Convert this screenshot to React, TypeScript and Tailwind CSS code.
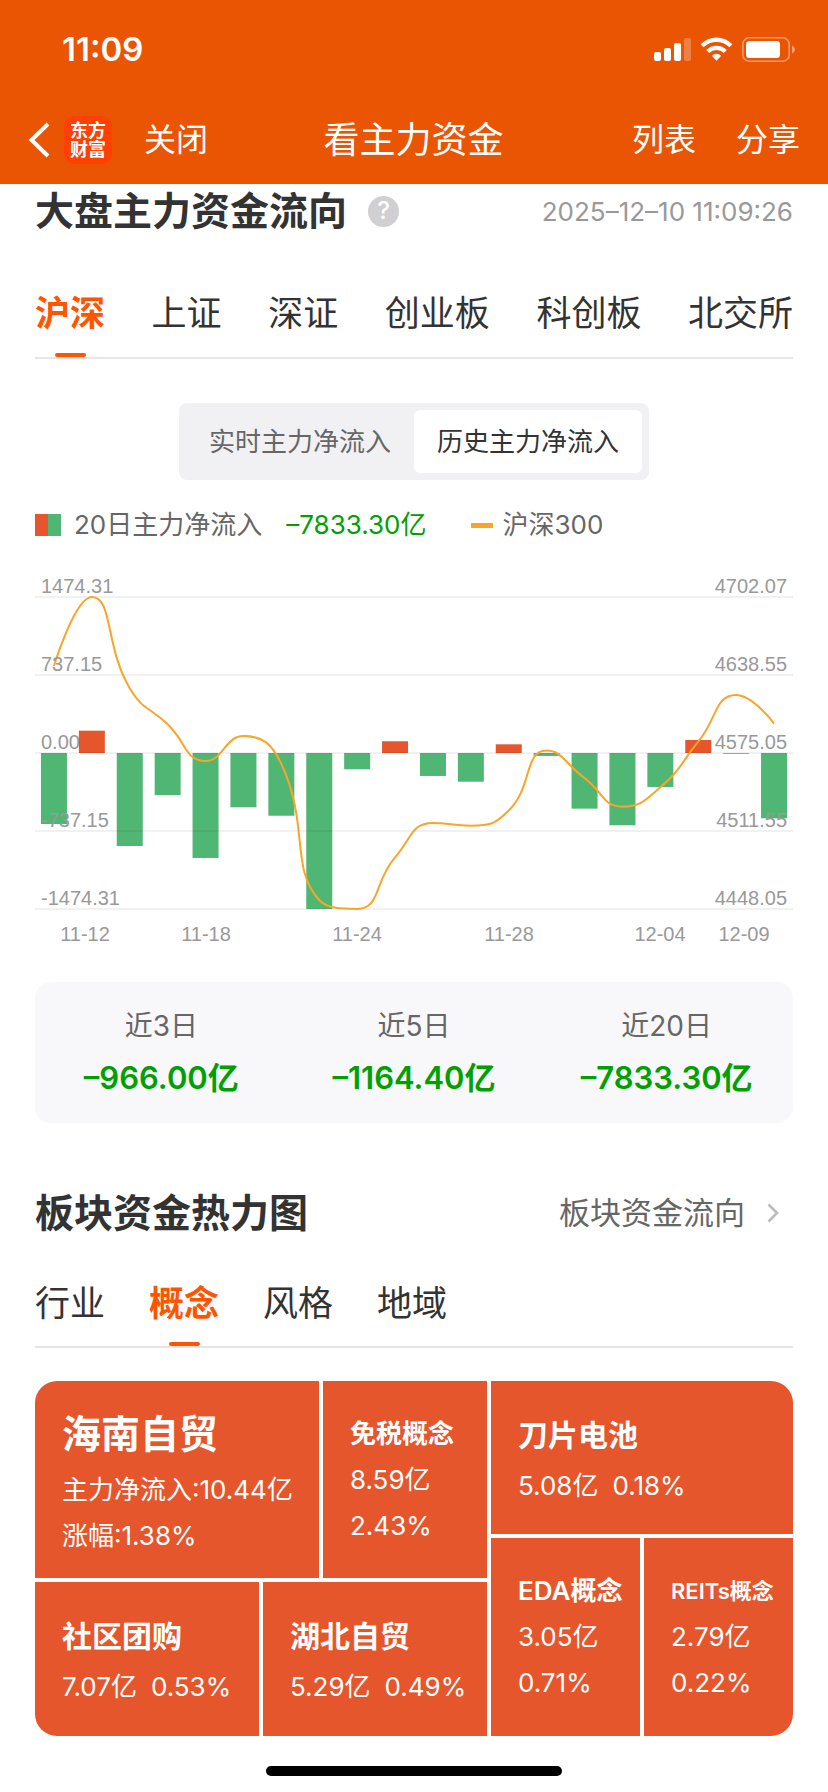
import { useState } from "react";

const FLOWS = [
  -671, 211, -879, -397, -992, -513, -593, -1474.31, -154, 111, -217, -271, 82,
  -28, -526, -683, -321, 123, -7, -617,
];

const INDEX = [
  4646.1, 4702.07, 4627.7, 4598.4, 4568.5, 4588.8, 4566.2, 4455.4, 4448.1,
  4490.1, 4518.1, 4515.9, 4528.2, 4577.0, 4554.6, 4531.4, 4547.2, 4584.3,
  4622.3, 4599.0,
];

const LEFT_TICKS = ["1474.31", "737.15", "0.00", "-737.15", "-1474.31"];
const RIGHT_TICKS = ["4702.07", "4638.55", "4575.05", "4511.55", "4448.05"];
const DATES = [
  { x: 50, text: "11-12" },
  { x: 171, text: "11-18" },
  { x: 322, text: "11-24" },
  { x: 474, text: "11-28" },
  { x: 625, text: "12-04" },
  { x: 709, text: "12-09" },
];

const STEP = 37.9;
const TOP = 37;
const BOTTOM = 349;
const ZERO = 193;

type Point = [number, number];

const clamp = (v: number, a: number, b: number) =>
  Math.max(Math.min(a, b), Math.min(Math.max(a, b), v));

/* Smooth curve whose control points never leave the box of their segment. */
function smoothPath(points: Point[]): string {
  let d = `M${points[0][0]} ${points[0][1]}`;
  let c0: Point = points[0];
  for (let i = 1; i < points.length; i++) {
    const [x, y] = points[i];
    const prev = points[i - 1];
    let c1: Point = [x, y];
    let next0: Point = [x, y];
    if (i < points.length - 1) {
      const next = points[i + 1];
      const lp = Math.hypot(x - prev[0], y - prev[1]);
      const ln = Math.hypot(next[0] - x, next[1] - y);
      const r = ln / (ln + lp);
      next0 = [
        clamp(x + (next[0] - prev[0]) * 0.5 * r, next[0], x),
        clamp(y + (next[1] - prev[1]) * 0.5 * r, next[1], y),
      ];
      c1 = [
        clamp(x - ((next0[0] - x) * lp) / ln, prev[0], x),
        clamp(y - ((next0[1] - y) * lp) / ln, prev[1], y),
      ];
      next0 = [x + ((x - c1[0]) * ln) / lp, y + ((y - c1[1]) * ln) / lp];
    }
    d += `C${c0[0]} ${c0[1]} ${c1[0]} ${c1[1]} ${x} ${y}`;
    c0 = next0;
  }
  return d;
}

function FlowChart() {
  const points: Point[] = INDEX.map((v, i) => [
    STEP * (i + 0.5),
    TOP + ((4702.07 - v) / (4702.07 - 4448.05)) * (BOTTOM - TOP),
  ]);
  return (
    <svg
      viewBox="0 0 758 400"
      className="mt-[15px] block h-auto w-full font-['Liberation_Sans',Arial,sans-serif] text-[20px]"
      role="img"
      aria-label="20日主力净流入与沪深300走势"
    >
      {FLOWS.map((v, i) => {
        const h = (Math.abs(v) / 1474.31) * 156;
        return (
          <rect
            key={i}
            x={STEP * (i + 0.5) - 13}
            y={v > 0 ? ZERO - h : ZERO}
            width={26}
            height={h}
            fill={v > 0 ? "#e5562d" : "#50b674"}
          />
        );
      })}
      {LEFT_TICKS.map((t, i) => (
        <rect key={t} x={0} y={36 + i * 78} width={758} height={2} fill="#000" fillOpacity={0.055} />
      ))}
      <path d={smoothPath(points)} fill="none" stroke="#faa528" strokeWidth={2} />
      {LEFT_TICKS.map((t, i) => (
        <text key={t} x={6} y={33 + i * 78} fill="#999">
          {t}
        </text>
      ))}
      {RIGHT_TICKS.map((t, i) => (
        <text key={t} x={752} y={33 + i * 78} textAnchor="end" fill="#999">
          {t}
        </text>
      ))}
      {DATES.map((d) => (
        <text key={d.text} x={d.x} y={381} textAnchor="middle" fill="#999">
          {d.text}
        </text>
      ))}
    </svg>
  );
}

function Tabs({
  items,
  initial,
  className,
}: {
  items: string[];
  initial: string;
  className: string;
}) {
  const [active, setActive] = useState(initial);
  return (
    <div role="tablist" className={`flex border-b-2 border-[#e6e6e6] text-[35px] leading-[48px] ${className}`}>
      {items.map((item) => (
        <button
          key={item}
          role="tab"
          aria-selected={item === active}
          onClick={() => setActive(item)}
          className={`relative whitespace-nowrap ${item === active ? "font-bold text-[#ff5500]" : "text-[#333]"}`}
        >
          {item}
          {item === active && (
            <span className="absolute inset-x-0 bottom-0 mx-auto h-1 w-[31px] rounded-xs bg-[#ff5500]" />
          )}
        </button>
      ))}
    </div>
  );
}

function Header() {
  return (
    <header className="bg-[#ea5504] text-white">
      <div className="flex h-[100px] items-center justify-between pr-[32px] pl-[62px]">
        <span className="text-[33px] font-semibold">11:09</span>
        <svg width="142" height="26" viewBox="0 0 142 26" fill="#fff" aria-hidden="true">
          <rect x="0" y="15" width="7" height="9" rx="2" />
          <rect x="10" y="11" width="7" height="13" rx="2" />
          <rect x="20" y="6" width="7" height="18" rx="2" />
          <rect x="30" y="1" width="7" height="23" rx="2" fillOpacity="0.25" />
          <path d="M46.6 7.2 A22.5 22.5 0 0 1 78.4 7.2 L75.4 10.3 A18.2 18.2 0 0 0 49.6 10.3Z" />
          <path d="M52.2 13 A14.5 14.5 0 0 1 72.8 13 L69.8 16.1 A10.4 10.4 0 0 0 55.2 16.1Z" />
          <path d="M57.8 18.7 A6.6 6.6 0 0 1 67.2 18.7 L62.5 23.8Z" />
          <rect x="88.8" y="0.8" width="46.4" height="23.4" rx="6.5" fill="none" stroke="#fff" strokeOpacity="0.42" strokeWidth="1.6" />
          <rect x="92" y="4" width="34" height="17" rx="3.5" />
          <path d="M138 8.5 Q141 9.8 141 12.5 Q141 15.2 138 16.5Z" fillOpacity="0.45" />
        </svg>
      </div>
      <nav className="grid h-[84px] grid-cols-[1fr_auto_1fr] items-center pr-7 pb-1 pl-[27px]">
        <div className="flex items-center">
          <button aria-label="返回">
            <svg width="24" height="38" viewBox="0 0 24 38" fill="none" stroke="#fff" strokeWidth="4" aria-hidden="true">
              <path d="M21 3 L4.5 19 L21 35" />
            </svg>
          </button>
          <span className="ml-[13px] grid h-12 w-12 place-content-center rounded-[10px] bg-[#ff4000] text-center text-[18px] leading-[19px] font-bold">
            <span>东方</span>
            <span>财富</span>
          </span>
          <button className="ml-8 text-[32px]">关闭</button>
        </div>
        <h1 className="text-[36px]">看主力资金</h1>
        <div className="flex justify-end gap-10 text-[32px]">
          <button>列表</button>
          <button>分享</button>
        </div>
      </nav>
    </header>
  );
}

const STATS = [
  { label: "近3日", value: "–966.00亿" },
  { label: "近5日", value: "–1164.40亿" },
  { label: "近20日", value: "–7833.30亿" },
];

function Cell({
  name,
  titleClass,
  lines,
  inline = false,
}: {
  name: string;
  titleClass: string;
  lines: string[];
  inline?: boolean;
}) {
  return (
    <a href="#" className="flex min-w-0 flex-col justify-center bg-[#e5562d] pl-[27px] whitespace-nowrap text-white">
      <span className={`font-semibold ${titleClass}`}>{name}</span>
      <span className={`flex text-[26px] leading-[46px] ${inline ? "gap-[14px]" : "flex-col"}`}>
        {lines.map((l) => (
          <span key={l}>{l}</span>
        ))}
      </span>
    </a>
  );
}

function HeatMap() {
  return (
    <div className="mt-[33px] grid h-[355px] grid-cols-[452fr_302fr] gap-1 overflow-hidden rounded-[22px]">
      <div className="grid grid-rows-[197fr_154fr] gap-1">
        <div className="grid grid-cols-[284fr_164fr] gap-1">
          <Cell name="海南自贸" titleClass="text-[39px] leading-[66px]" lines={["主力净流入:10.44亿", "涨幅:1.38%"]} />
          <Cell name="免税概念" titleClass="text-[26px] leading-[46px]" lines={["8.59亿", "2.43%"]} />
        </div>
        <div className="grid grid-cols-2 gap-1">
          <Cell name="社区团购" titleClass="text-[30px] leading-[56px]" lines={["7.07亿", "0.53%"]} inline />
          <Cell name="湖北自贸" titleClass="text-[30px] leading-[56px]" lines={["5.29亿", "0.49%"]} inline />
        </div>
      </div>
      <div className="grid grid-rows-[153fr_198fr] gap-1">
        <Cell name="刀片电池" titleClass="text-[30px] leading-[56px]" lines={["5.08亿", "0.18%"]} inline />
        <div className="grid grid-cols-2 gap-1">
          <Cell name="EDA概念" titleClass="text-[26px] leading-[46px]" lines={["3.05亿", "0.71%"]} />
          <Cell name="REITs概念" titleClass="text-[22px] leading-[46px]" lines={["2.79亿", "0.22%"]} />
        </div>
      </div>
    </div>
  );
}

export default function App() {
  const [mode, setMode] = useState("历史主力净流入");
  return (
    <div className="min-h-screen bg-white font-['Inter','Noto_Sans_CJK_SC',sans-serif] text-[#333]">
      <Header />
      <main className="px-[35px]">
        <div className="flex h-[54px] items-center">
          <h2 className="text-[39px] leading-[54px] font-bold">大盘主力资金流向</h2>
          <button
            aria-label="说明"
            className="ml-[21px] grid h-[31px] w-[31px] place-content-center rounded-full bg-[#d0d0d3] text-[24px] leading-none font-medium text-white"
          >
            ?
          </button>
          <time className="ml-auto text-[26px] text-[#999]">2025–12–10 11:09:26</time>
        </div>

        <Tabs
          items={["沪深", "上证", "深证", "创业板", "科创板", "北交所"]}
          initial="沪深"
          className="mt-[31px] h-[90px] justify-between"
        />

        <div className="mt-11 flex justify-center">
          <div className="flex rounded-lg bg-[#f1f1f4] p-[7px]">
            {["实时主力净流入", "历史主力净流入"].map((m) => (
              <button
                key={m}
                aria-pressed={m === mode}
                onClick={() => setMode(m)}
                className={`h-[63px] rounded-md px-[23px] text-[26px] ${m === mode ? "bg-white text-[#333]" : "text-[#666]"}`}
              >
                {m}
              </button>
            ))}
          </div>
        </div>

        <div className="mt-[25px] flex h-10 items-center text-[26px] leading-10 text-[#666]">
          <span className="flex h-[22px] w-[26px]">
            <span className="flex-1 bg-[#e5562d]" />
            <span className="flex-1 bg-[#50b674]" />
          </span>
          <span className="ml-[13px]">20日主力净流入</span>
          <span className="ml-6 text-[#00a000]">–7833.30亿</span>
          <span className="ml-11 h-[5px] w-[22px] bg-[#faa528]" />
          <span className="ml-[10px]">沪深300</span>
        </div>

        <FlowChart />

        <dl className="mt-[22px] grid grid-cols-3 rounded-2xl bg-[#f8f8fa] pt-6 pb-[21px] text-center">
          {STATS.map((s) => (
            <div key={s.label}>
              <dt className="text-[28px] leading-10 text-[#666]">{s.label}</dt>
              <dd className="mt-2 text-[31px] leading-[48px] font-semibold text-[#00a000]">{s.value}</dd>
            </div>
          ))}
        </dl>

        <div className="mt-[60px] flex h-[60px] items-center justify-between">
          <h2 className="text-[39px] font-bold">板块资金热力图</h2>
          <a href="#" className="flex items-center gap-[22px] pr-[14px] text-[31px] text-[#666]">
            板块资金流向
            <svg width="12" height="20" viewBox="0 0 12 20" fill="none" stroke="#bbb" strokeWidth="2.6" aria-hidden="true">
              <path d="M1.5 1.5 L10 10 L1.5 18.5" />
            </svg>
          </a>
        </div>

        <Tabs items={["行业", "概念", "风格", "地域"]} initial="概念" className="mt-[17px] h-[88px] gap-11" />

        <HeatMap />
      </main>
      <div className="mx-auto mt-[30px] mb-4 h-[10px] w-[296px] rounded-full bg-black" />
    </div>
  );
}
